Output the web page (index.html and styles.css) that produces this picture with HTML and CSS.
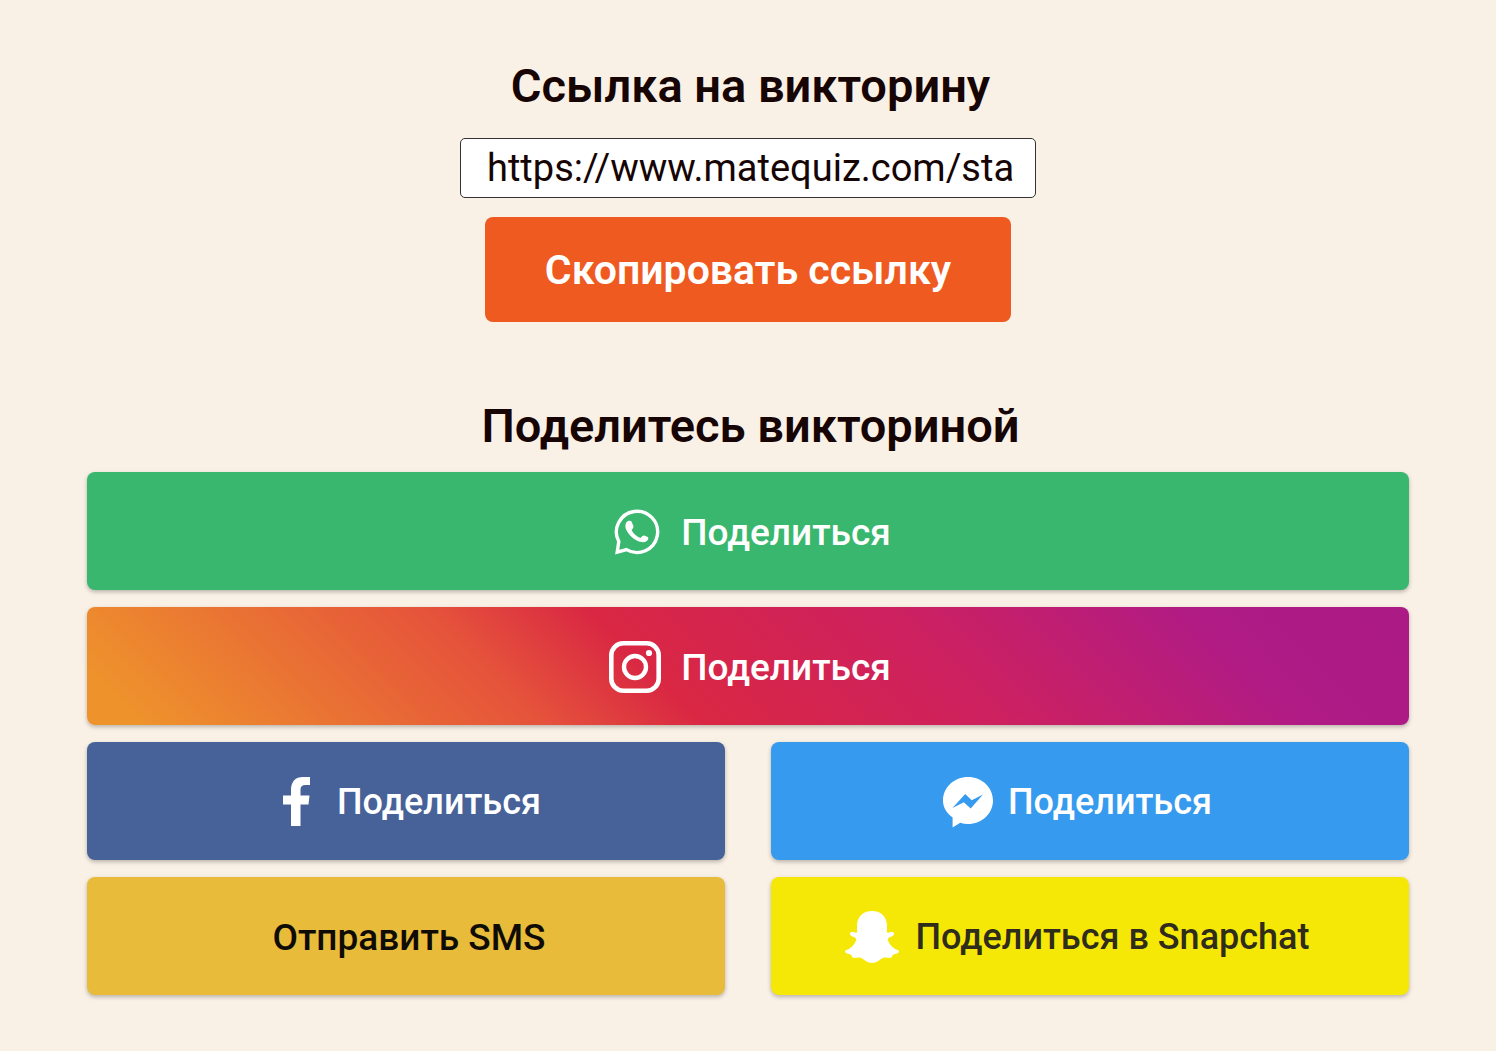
FILE: index.html
```html
<!DOCTYPE html>
<html lang="ru">
<head>
    <meta charset="UTF-8">
    <meta name="viewport" content="width=device-width, initial-scale=1.0">
    <title>Ссылка на викторину</title>
    <link rel="stylesheet" href="styles.css">
</head>
<body>
<main class="container">
    <section class="link-box">
        <h2><label for="quizLink">Ссылка на викторину</label></h2>
        <input type="text" id="quizLink" class="quiz-link" value="https://www.matequiz.com/sta" readonly>
        <button type="button" class="copy-btn">Скопировать ссылку</button>
    </section>

    <section class="share-box">
        <h2>Поделитесь викториной</h2>
        <div class="share-grid">
            <a href="#" class="share-btn wide whatsapp">
                <svg class="icon" viewBox="0 0 52 52" aria-hidden="true">
                    <path d="M9.8 35.5A20.6 20.6 0 1 1 17.5 43.6L8.2 46.2Z" fill="none" stroke="#fff" stroke-width="3.4"/>
                    <path d="M18.600 15.200C20.700 14.200 22.100 14.800 22.700 16L24.300 19.800C24.700 21 24.300 22 22.600 24.300C25 28.200 27.600 30.500 31.500 32C33.200 30.300 34 29 35.200 29.500L38.800 31C39.800 31.800 39.300 34 37.500 35.200C35 37 31.500 36.300 27.800 34.600C23.500 32.400 20.300 29 18 25.200C15.800 21.500 15.800 17 18.600 15.200Z" fill="#fff"/>
                </svg>
                <span>Поделиться</span>
            </a>
            <a href="#" class="share-btn wide instagram">
                <svg class="icon" viewBox="0 0 52 52" aria-hidden="true">
                    <rect x="2.3" y="2.3" width="47.4" height="47.4" rx="12" fill="none" stroke="#fff" stroke-width="4.6"/>
                    <circle cx="26" cy="26" r="11" fill="none" stroke="#fff" stroke-width="4.4"/>
                    <circle cx="40" cy="12" r="3.1" fill="#fff"/>
                </svg>
                <span>Поделиться</span>
            </a>
            <a href="#" class="share-btn facebook">
                <svg class="icon" viewBox="0 0 52 52" aria-hidden="true">
                    <path d="M20 50V28.500H12V19.500H20V14C20 5.500 24.500 1 32 1H39V9H34.500C31 9 29.500 10.500 29.500 13.500V19.500H38.500L37.500 28.500H29.500V50Z" fill="#fff"/>
                </svg>
                <span>Поделиться</span>
            </a>
            <a href="#" class="share-btn messenger">
                <svg class="icon" viewBox="0 0 52 52" aria-hidden="true">
                    <path d="M26 1C39.800 1 51 11.300 51 24.500S39.800 48 26 48C23.200 48 20.600 47.600 18.200 46.800L10.600 51.500V41.500C4.700 37.200 1 31.300 1 24.500C1 11.300 12.200 1 26 1Z" fill="#fff"/>
                    <path d="M10.500 32L23.200 18L29.700 24.200L41 18.500L28.700 32.600L21.800 26.200Z" fill="#369aee"/>
                </svg>
                <span>Поделиться</span>
            </a>
            <a href="#" class="share-btn sms">
                <span>Отправить SMS</span>
            </a>
            <a href="#" class="share-btn snapchat">
                <svg class="icon" viewBox="0 0 54 52" aria-hidden="true">
                    <path d="M27 0C36 0 42 6 42 14.500V21.500C44.500 22.500 46 20.200 48.600 21.500C50 23 48.500 24.500 46.500 25.500C43.500 26.500 42.500 27.500 43 29.500C44.800 34 48.500 38 52.700 39C54.500 39.800 54.200 41.500 52.500 42.300C50.500 43.300 48.200 43.300 47.500 44.200C47 45.500 47 46.700 45.500 46.800C43.500 47 41 46 38.500 46.800C35 48 32.500 52 27 52S19 48 15.500 46.800C13 46 10.500 47 8.500 46.800C7 46.700 7 45.500 6.500 44.200C5.800 43.300 3.500 43.300 1.500 42.300C-.2 41.500-.5 39.800 1.300 39C5.500 38 9.200 34 11 29.500C11.500 27.500 10.500 26.500 7.500 25.500C5.500 24.500 4 23 5.400 21.500C8 20.200 9.500 22.500 12 21.500V14.500C12 6 18 0 27 0Z" fill="#fff"/>
                </svg>
                <span>Поделиться в Snapchat</span>
            </a>
        </div>
    </section>
</main>
</body>
</html>
```
FILE: styles.css
```css
* {
    box-sizing: border-box;
}
body {
    margin: 0;
    font-family: Roboto, "Open Sans", sans-serif;
    background-color: #f9f0e6;
    color: #160504;
}
.container {
    padding: 56px 87px;
}
h2 {
    margin: 0;
    padding-left: 5px;
    font-size: 47px;
    font-weight: 600;
    line-height: 60px;
    text-align: center;
}
.link-box {
    display: flex;
    flex-direction: column;
    align-items: center;
}
.quiz-link {
    width: 576px;
    max-width: 100%;
    height: 60px;
    margin-top: 22px;
    padding: 0 12px 0 26px;
    border: 1px solid #333;
    border-radius: 5px;
    background-color: #fff;
    color: #160504;
    font-family: inherit;
    font-size: 38px;
}
.copy-btn {
    margin-top: 19px;
    padding: 2px 60px 0;
    border: 0;
    border-radius: 8px;
    background-color: #ef5a20;
    color: #fff;
    font-family: inherit;
    font-size: 41px;
    font-weight: 600;
    line-height: 103px;
}
.share-box {
    margin-top: 74px;
}
.share-grid {
    display: grid;
    grid-template-columns: 1fr 1fr;
    gap: 17px 46px;
    margin-top: 16px;
}
.share-btn {
    display: flex;
    align-items: center;
    justify-content: center;
    gap: 14px;
    height: 118px;
    padding-top: 2px;
    border-radius: 8px;
    box-shadow: 0 2px 4px rgba(0, 0, 0, 0.25);
    color: #fff;
    font-size: 36px;
    font-weight: 500;
    text-decoration: none;
}
.wide {
    grid-column: 1 / -1;
    gap: 20px;
    padding-left: 4px;
    font-size: 37px;
}
.icon {
    height: 52px;
    flex-shrink: 0;
}
.whatsapp {
    background-color: #39b76e;
}
.instagram {
    background: linear-gradient(45deg, #ee922c 4%, #e5523b 32%, #d92743 43%, #cd2160 64%, #b01b85 85%, #ab1a85);
}
.facebook {
    background-color: #476299;
}
.messenger {
    padding-right: 26px;
    background-color: #369aee;
}
.sms {
    padding-left: 6px;
    background-color: #e8bb3a;
    color: #0f0c05;
    font-size: 37px;
}
.snapchat {
    gap: 17px;
    padding-right: 26px;
    background-color: #f6e806;
    color: #2f2c1c;
}
```
